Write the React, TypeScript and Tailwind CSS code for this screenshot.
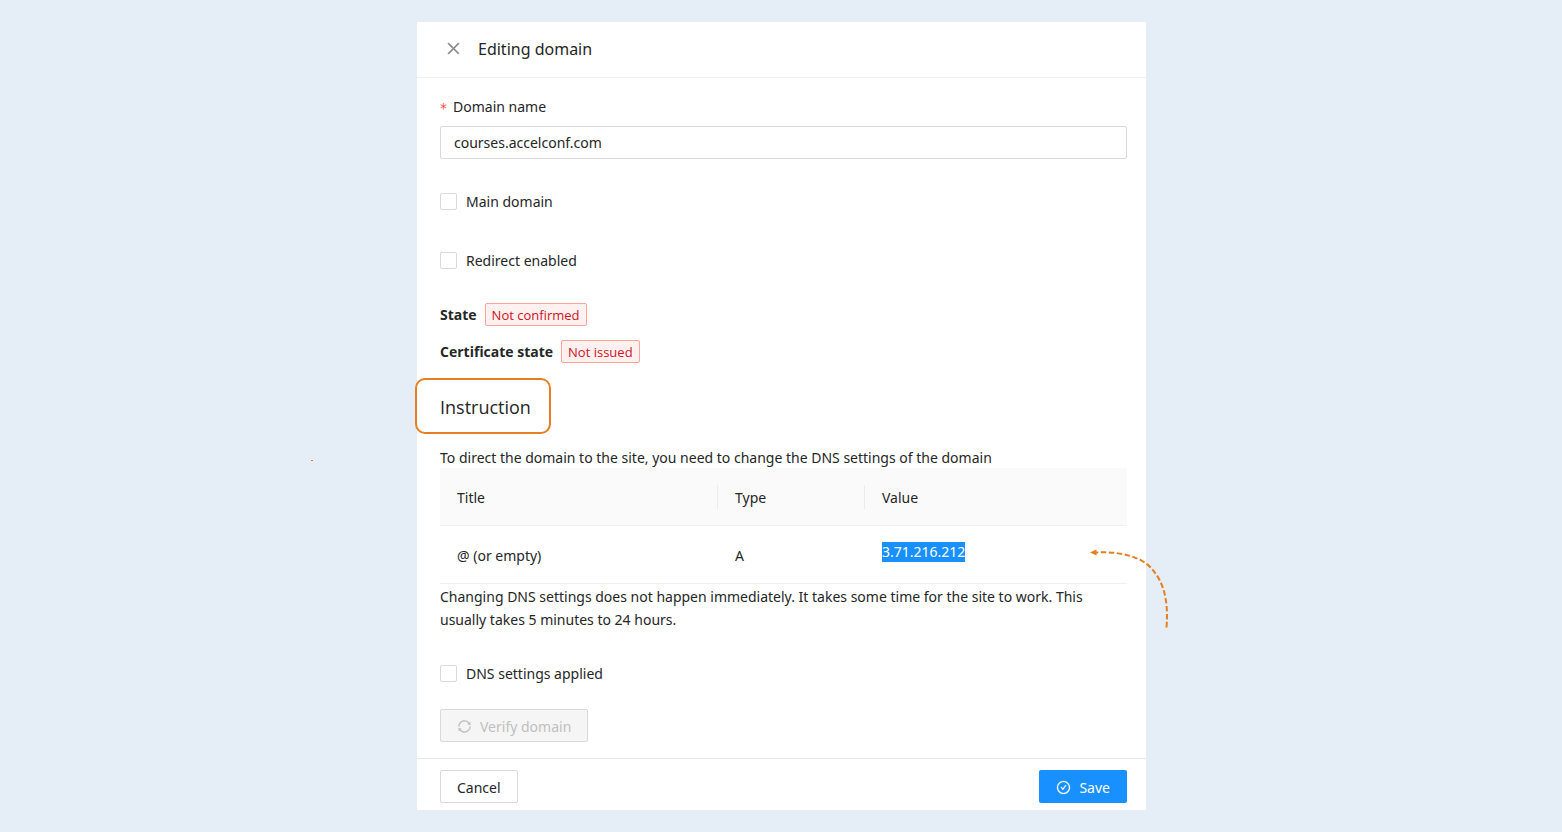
import { useState } from "react";
import type { ReactNode } from "react";
import { AiOutlineCheckCircle, AiOutlineClose, AiOutlineSync } from "react-icons/ai";

const records = [{ title: "@ (or empty)", type: "A", value: "3.71.216.212" }];

function Checkbox({ id, children }: { id: string; children: ReactNode }) {
  const [checked, setChecked] = useState(false);
  return (
    <div className="flex h-[23px] items-center gap-[9px]">
      <input
        id={id}
        type="checkbox"
        checked={checked}
        onChange={(e) => setChecked(e.target.checked)}
        className="size-[17px] shrink-0 appearance-none rounded-[2px] border border-[#d9d9d9] bg-white checked:border-[#1890ff] checked:bg-[#1890ff]"
      />
      <label htmlFor={id}>{children}</label>
    </div>
  );
}

function StateRow({ label, children }: { label: string; children: ReactNode }) {
  return (
    <div className="flex items-center gap-2 font-['Open_Sans','Noto_Sans',sans-serif]">
      <strong className="font-bold">{label}</strong>
      <span className="h-[23px] rounded-[2px] border border-[#ffa39e] bg-[#fff1f0] px-[6px] text-[13px] leading-[22px] text-[#cf1322]">
        {children}
      </span>
    </div>
  );
}

/* Header cell with the short divider that doesn't reach the row edges */
function HeadCell({ children, last }: { children: ReactNode; last?: boolean }) {
  return (
    <th scope="col" className="h-[57px] p-0 pt-0.5 text-left font-normal">
      <div className={last ? "pl-[17px]" : "flex h-6 items-center border-r border-[#ebebeb] pl-[17px]"}>
        {children}
      </div>
    </th>
  );
}

function DashedArrow() {
  return (
    <svg
      className="pointer-events-none absolute top-[20px] right-[-44px]"
      width="84"
      height="84"
      viewBox="0 0 84 84"
      fill="none"
      aria-hidden="true"
    >
      <path
        d="M79.5 81.5C82 50 74.500 34 65 23S36 5 9 6.500"
        stroke="#e67e22"
        strokeWidth="2"
        strokeDasharray="5.500 2.500"
      />
      <path d="M3 6.500L9.500 3.500V9.500Z" fill="#e67e22" />
    </svg>
  );
}

export default function App() {
  const [domain, setDomain] = useState("courses.accelconf.com");

  return (
    <div className="min-h-screen bg-[#e5edf6] py-[22px] pl-px font-['Noto_Sans','Open_Sans',sans-serif] text-[14px] leading-[23px] text-[#262626]">
      <main className="relative mx-auto flex max-w-[729px] flex-col bg-white">
        <span className="absolute top-[438px] left-[-106px] h-px w-[2px] bg-[#e67e22]" />

        <header className="flex h-[56px] items-center gap-4 border-b border-[#f0f0f0] pl-7">
          <button type="button" aria-label="Close" className="pb-0.5 text-[#8c8c8c]">
            <AiOutlineClose size={17} strokeWidth={24} />
          </button>
          <h1 className="text-[16px]">Editing domain</h1>
        </header>

        <form className="flex flex-col pt-[17px] pr-[19px] pb-4 pl-[23px]">
          <label htmlFor="domain" className="flex h-[23px] gap-[6px]">
            <span className="pt-0.5 font-['DejaVu_Sans',sans-serif] text-[#ff4d4f]">*</span>
            Domain name
          </label>
          <input
            id="domain"
            type="text"
            value={domain}
            onChange={(e) => setDomain(e.target.value)}
            className="mt-2 h-[33px] w-full rounded-[2px] border border-[#d9d9d9] px-[13px] outline-none focus:border-[#1890ff]"
          />

          <div className="mt-[31px] flex flex-col gap-9">
            <Checkbox id="main">Main domain</Checkbox>
            <Checkbox id="redirect">Redirect enabled</Checkbox>
          </div>

          <div className="mt-[31px] flex flex-col gap-[14px]">
            <StateRow label="State">Not confirmed</StateRow>
            <StateRow label="Certificate state">Not issued</StateRow>
          </div>

          <h2 className="mt-[15px] ml-[-25px] flex h-[56px] items-center self-start rounded-[10px] border-2 border-[#e67e22] pt-0.5 pr-[18px] pl-[23px] font-['Open_Sans','Noto_Sans',sans-serif] text-[18px]">
            Instruction
          </h2>

          <p className="mt-[14px] leading-5">
            To direct the domain to the site, you need to change the DNS settings of the domain
          </p>

          <table className="w-full table-fixed border-collapse">
            <colgroup>
              <col className="w-[278px]" />
              <col className="w-[147px]" />
              <col />
            </colgroup>
            <thead>
              <tr className="border-b border-[#f0f0f0] bg-[#fafafa]">
                <HeadCell>Title</HeadCell>
                <HeadCell>Type</HeadCell>
                <HeadCell last>Value</HeadCell>
              </tr>
            </thead>
            <tbody>
              {records.map((r) => (
                <tr key={r.value} className="border-b border-[#f0f0f0]">
                  <td className="h-[58px] pt-0.5 pb-0 pl-[17px]">{r.title}</td>
                  <td className="pt-0.5 pb-0 pl-[17px]">{r.type}</td>
                  <td className="relative pt-0 pb-[6px] pl-[17px]">
                    <span className="inline-block h-5 bg-[#1890ff] leading-5 text-white">{r.value}</span>
                    <DashedArrow />
                  </td>
                </tr>
              ))}
            </tbody>
          </table>

          <p className="mt-px">
            Changing DNS settings does not happen immediately. It takes some time for the site to work. This
            usually takes 5 minutes to 24 hours.
          </p>

          <div className="mt-[31px]">
            <Checkbox id="applied">DNS settings applied</Checkbox>
          </div>

          <button
            type="button"
            disabled
            className="mt-6 flex h-[33px] items-center gap-2 self-start rounded-[2px] border border-[#d9d9d9] bg-[#f5f5f5] px-4 pt-0.5 text-[#bfbfbf]"
          >
            <AiOutlineSync size={15} strokeWidth={16} />
            Verify domain
          </button>
        </form>

        <footer className="flex justify-between border-t border-[#e8e8e8] pt-[11px] pr-[19px] pb-[7px] pl-[23px]">
          <button type="button" className="h-[33px] rounded-[2px] border border-[#d9d9d9] bg-white px-4 pt-0.5">
            Cancel
          </button>
          <button
            type="button"
            className="flex h-[33px] items-center gap-2 rounded-[2px] bg-[#1890ff] px-[17px] pt-0.5 text-white"
          >
            <AiOutlineCheckCircle size={15} strokeWidth={16} />
            Save
          </button>
        </footer>
      </main>
    </div>
  );
}
